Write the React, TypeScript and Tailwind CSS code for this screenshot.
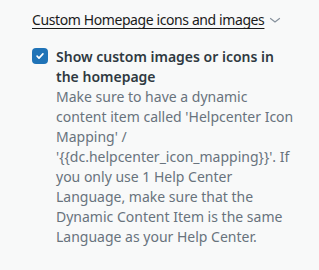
import React from "react";

function CheckIcon() {
  return (
    <svg viewBox="0 0 12 12" className="h-[10px] w-[10px]" fill="none">
      <path
        d="M2.5 6.2l2.3 2.3 4.7-5"
        stroke="white"
        strokeWidth="2"
        strokeLinecap="round"
        strokeLinejoin="round"
      />
    </svg>
  );
}

function ChevronDown() {
  return (
    <svg viewBox="0 0 12 12" className="h-[12px] w-[12px]" fill="none">
      <path d="M1.5 4.5l4.5 3.5 4.5-3.5" stroke="#87929d" strokeWidth="1.2" strokeLinecap="round" />
    </svg>
  );
}

export default function App() {
  return (
    <div className="min-h-[270px] w-[319px] bg-[#f8f9f9] pl-8 pr-6 pt-[10px] font-['Noto_Sans',sans-serif] text-[14px] leading-5">
      <div className="flex items-center gap-[5px]">
        <span className="tracking-[-0.4px] text-[#1b1b1b] underline decoration-1 underline-offset-[3px]">
          Custom Homepage icons and images
        </span>
        <ChevronDown />
      </div>
      <label className="mt-[17px] flex gap-[8px]">
        <span className="mt-[1px] flex h-4 w-4 shrink-0 items-center justify-center rounded-[4px] bg-[#1f73b7]">
          <CheckIcon />
        </span>
        <div className="flex flex-col">
          <span className="font-semibold text-[#2f3941]">
            Show custom images or icons in the homepage
          </span>
          <span className="text-[#68737d]">
            Make sure to have a dynamic content item called 'Helpcenter Icon Mapping' /
            '{"{{"}dc.helpcenter_icon_mapping{"}}"}'. If you only use 1 Help Center Language, make
            sure that the Dynamic Content Item is the same Language as your Help Center.
          </span>
        </div>
      </label>
    </div>
  );
}
